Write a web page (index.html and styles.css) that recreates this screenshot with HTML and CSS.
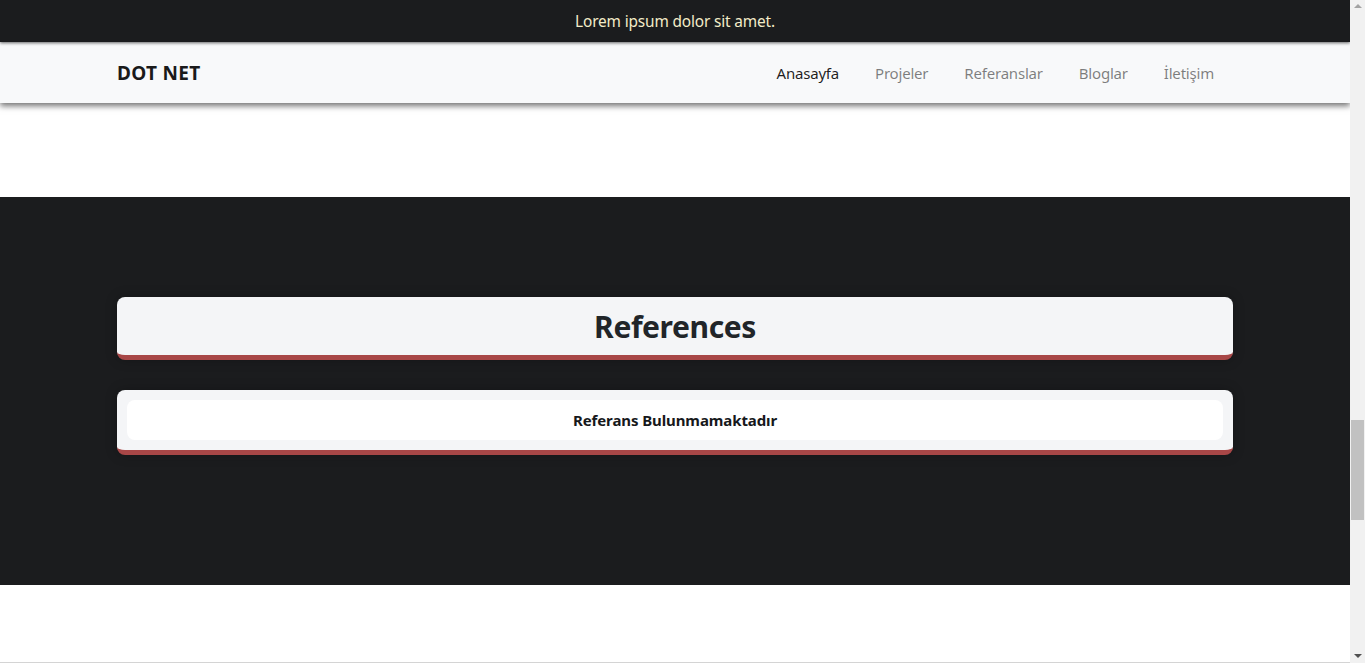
FILE: index.html
```html
<!DOCTYPE html>
<html lang="tr">
<head>
<meta charset="utf-8">
<title>DOT NET - References</title>
<link rel="stylesheet" href="styles.css">
</head>
<body>
<div class="page">
  <div class="topbar">Lorem ipsum dolor sit amet.</div>
  <nav class="navbar">
    <div class="container nav-inner">
      <a class="brand" href="#">DOT NET</a>
      <ul class="nav-links">
        <li><a class="nav-link active" href="#">Anasayfa</a></li>
        <li><a class="nav-link" href="#">Projeler</a></li>
        <li><a class="nav-link" href="#">Referanslar</a></li>
        <li><a class="nav-link" href="#">Bloglar</a></li>
        <li><a class="nav-link" href="#">İletişim</a></li>
      </ul>
    </div>
  </nav>
  <div class="spacer-top"></div>
  <section class="refs">
    <div class="container">
      <div class="card title-card"><h1>References</h1></div>
      <div class="card list-card">
        <div class="empty">Referans Bulunmamaktadır</div>
      </div>
    </div>
  </section>
  <div class="spacer-bottom"></div>
</div>
<div class="scrollbar">
  <span class="arrow up"></span>
  <span class="thumb"></span>
  <span class="arrow down"></span>
</div>
<div class="hscroll"></div>
</body>
</html>
```
FILE: styles.css
```css
* { box-sizing: border-box; }
html, body { margin: 0; padding: 0; height: 100%; overflow: hidden; }
body {
  font-family: "Noto Sans", "Open Sans", sans-serif;
  font-size: 16px;
  color: #212529;
  background: #fff;
}
.page {
  width: 1350px;
  height: 663px;
  overflow: hidden;
}
.container {
  max-width: 1140px;
  margin: 0 auto;
  padding: 0 12px;
}
.topbar {
  height: 42px;
  padding-top: 1px;
  background: #1b1c1e;
  color: #f3ecc9;
  text-align: center;
  line-height: 41px;
  font-size: 15.4px;
  letter-spacing: -0.15px;
  position: relative;
  z-index: 3;
  box-shadow: 0 1px 3px rgba(0,0,0,0.6);
}
.navbar {
  height: 61px;
  background: #f8f9fa;
  box-shadow: 0 3px 6px rgba(0,0,0,0.55);
  position: relative;
  z-index: 2;
}
.nav-inner {
  height: 100%;
  display: flex;
  align-items: center;
  justify-content: space-between;
}
.brand {
  font-size: 19px;
  font-weight: 700;
  color: #1a1a1a;
  text-decoration: none;
  letter-spacing: 0.3px;
}
.nav-links {
  list-style: none;
  margin: 0;
  padding: 0;
  display: flex;
}
.nav-link {
  display: block;
  padding: 8px 18px;
  font-size: 15px;
  letter-spacing: -0.2px;
  color: rgba(0,0,0,0.5);
  text-decoration: none;
}
.nav-links li:last-child .nav-link { padding-right: 19px; }
.nav-link.active { color: rgba(0,0,0,0.88); }
.spacer-top { height: 94px; }
.refs {
  background: #1b1c1e;
  padding: 100px 0 130px;
}
.card {
  background: #f4f5f7;
  border-radius: 8px;
  border-bottom: 5px solid #a84747;
  box-shadow: 0 0 12px rgba(0,0,0,0.25);
}
.title-card {
  height: 63px;
  display: flex;
  align-items: center;
  justify-content: center;
}
.title-card h1 {
  margin: 0;
  font-size: 30px;
  font-weight: 700;
  color: #212529;
  letter-spacing: -0.4px;
}
.list-card {
  margin-top: 30px;
  padding: 10px;
}
.empty {
  background: #fff;
  border-radius: 8px;
  height: 40px;
  display: flex;
  align-items: center;
  justify-content: center;
  font-weight: 700;
  font-size: 15px;
  letter-spacing: -0.1px;
  color: #16181b;
}
.spacer-bottom { height: 78px; }
.scrollbar {
  position: fixed;
  top: 0;
  right: 0;
  width: 15px;
  height: 663px;
  background: #f1f1f1;
}
.thumb {
  position: absolute;
  top: 420px;
  left: 1px;
  width: 13px;
  height: 100px;
  background: #c1c1c1;
}
.arrow {
  position: absolute;
  left: 4px;
  width: 0;
  height: 0;
  border-left: 4px solid transparent;
  border-right: 4px solid transparent;
}
.arrow.up { top: 4px; border-bottom: 4px solid #a3a3a3; }
.arrow.down { bottom: 5px; border-top: 4px solid #505050; }
.hscroll {
  position: fixed;
  left: 0;
  bottom: 0;
  width: 1350px;
  height: 1px;
  background: #d4d4d4;
}
```
